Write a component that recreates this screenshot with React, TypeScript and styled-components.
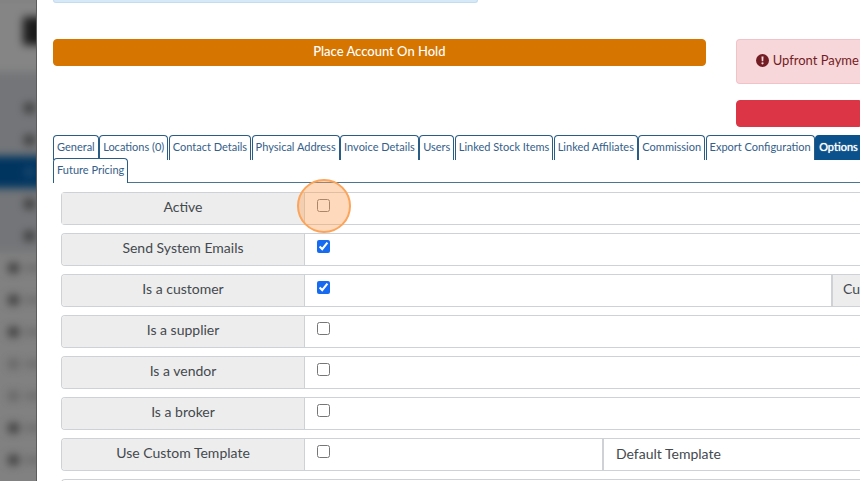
import React from "react";
import styled, { createGlobalStyle, css } from "styled-components";

const GlobalStyle = createGlobalStyle`
  * { box-sizing: border-box; }
  html, body, #root { height: 100%; }
  body {
    margin: 0;
    overflow: hidden;
    background: #fff;
    color: #44494e;
    font: 14px/20px Lato, "Noto Sans", sans-serif;
  }
  button, input, select { font: inherit; color: inherit; }
`;

const Page = styled.div`
  display: grid;
  grid-template-columns: 37px minmax(0, 1fr);
  height: 100vh;
  overflow: hidden;
`;

const Sidebar = styled.aside`
  overflow: hidden;
  background: #818181;
  border-right: 1px solid #5c5c5c;
`;

const Blurred = styled.div`
  filter: blur(4px);
  margin: 0 -12px;
`;

const Brand = styled.div`
  display: flex;
  justify-content: flex-end;
  height: 72px;
  padding: 17px 0 0;
  background: #858585;
`;

const BrandMark = styled.span`
  width: 25px;
  height: 28px;
  background: #1c1c1c;
`;

const NavGroup = styled.div`
  padding-top: 20px;
  background: #737578;
`;

const NavItem = styled.div<{ $active?: boolean; $nested?: boolean }>`
  display: flex;
  align-items: center;
  gap: 6px;
  height: 32px;
  padding-left: ${(p) => (p.$nested ? 36 : 20)}px;
  color: ${(p) => (p.$active ? "#3a6284" : "#3b3b3b")};
  background: ${(p) => (p.$active ? "#003560" : "transparent")};
`;

const NavDot = styled.span<{ $faint?: boolean }>`
  flex: none;
  width: 11px;
  height: 10px;
  border-radius: 4px;
  background: currentColor;
  opacity: ${(p) => (p.$faint ? 0.4 : 1)};
`;

const NavText = styled.span`
  flex: 1;
  height: 6px;
  background: currentColor;
  opacity: 0.35;
`;

const Panel = styled.main`
  padding-left: 16px;
  overflow: hidden;
  background: #fff;
`;

const InfoStrip = styled.div`
  width: 425px;
  height: 3px;
  background: #d6e9f9;
  border: 1px solid #c4dcf0;
  border-top: 0;
  border-radius: 0 0 4px 4px;
`;

const Actions = styled.section`
  display: grid;
  grid-template-columns: minmax(0, 21fr) minmax(0, 4fr);
  gap: 30px;
  align-items: start;
  margin-top: 36px;
`;

const SideActions = styled.div`
  display: grid;
  gap: 16px;
`;

const ActionButton = styled.button<{ $tone: string }>`
  width: 100%;
  height: 27px;
  padding: 0 8px 4px;
  border: 1px solid ${(p) => p.$tone};
  border-radius: 4px;
  background: ${(p) => p.$tone};
  color: #fff;
  font-size: 13px;
  font-weight: 500;
  line-height: 20px;
`;

const WideButton = styled(ActionButton)`
  border-radius: 4px 0 0 4px;
`;

const Alert = styled.div`
  display: flex;
  align-items: center;
  gap: 4px;
  height: 45px;
  padding: 0 0 3px 19px;
  border: 1px solid #f1c3c9;
  border-right: 0;
  border-radius: 4px 0 0 4px;
  background: #f8d7da;
  color: #721c24;
  font-size: 13px;
  white-space: nowrap;
  overflow: hidden;
  svg { flex: none; }
`;

const Tabs = styled.nav`
  margin-top: 8px;
  border-bottom: 1px solid #4c7590;
`;

const TabRow = styled.div`
  display: flex;
  justify-content: space-between;
  & + & { margin-top: -2px; margin-bottom: -1px; }
`;

const Tab = styled.button<{ $active?: boolean }>`
  flex: none;
  height: 25px;
  padding: 0 3px 2px;
  border: 1px solid #2a5d86;
  border-bottom: 0;
  border-radius: 4px 4px 0 0;
  background: #fff;
  color: #34608a;
  font-size: 11px;
  line-height: 16px;
  white-space: nowrap;
  ${(p) =>
    p.$active &&
    css`
      padding-right: 2px;
      border-right: 0;
      border-radius: 4px 0 0 0;
      background: #0b528c;
      border-color: #0b528c;
      color: #fff;
      text-shadow: 0 0 1px #fff;
    `}
`;

const Form = styled.form`
  display: grid;
  gap: 8px;
  padding: 9px 0 0 8px;
`;

const Row = styled.div`
  display: flex;
  height: 33px;
  border: 1px solid #ced2d6;
  border-right: 0;
  border-radius: 4px 0 0 4px;
  overflow: hidden;
`;

const Label = styled.label`
  flex: none;
  width: 243px;
  padding-top: 4px;
  border-right: 1px solid #ced2d6;
  background: #ededed;
  text-align: center;
`;

const Field = styled.div`
  flex: 1;
  padding: 6px 0 0 12px;
`;

const CheckSlot = styled.span`
  position: relative;
  display: block;
  width: 13px;
  height: 13px;
`;

const Checkbox = styled.input`
  display: block;
  width: 13px;
  height: 13px;
  margin: 0;
  accent-color: #176bf0;
`;

const ClickMarker = styled.span`
  position: absolute;
  top: 50%;
  left: 50%;
  width: 54px;
  height: 54px;
  transform: translate(-50%, -50%);
  border: 2px solid #fba45a;
  border-radius: 50%;
  background: rgba(255, 160, 84, 0.4);
  pointer-events: none;
`;

const ActiveRow = styled(Row)`
  overflow: visible;
`;

const SideLabel = styled.span`
  flex: none;
  width: 29px;
  padding: 4px 0 0 10px;
  border-left: 2px solid #ced2d6;
  background: #ededed;
  white-space: nowrap;
`;

const TemplateSelect = styled.select`
  flex: none;
  width: 258px;
  padding: 0 0 2px 12px;
  appearance: none;
  border: 0;
  border-left: 2px solid #ced2d6;
  border-radius: 0;
  background: #fff;
`;

const firstTabs = [
  "General",
  "Locations (0)",
  "Contact Details",
  "Physical Address",
  "Invoice Details",
  "Users",
  "Linked Stock Items",
  "Linked Affiliates",
  "Commission",
  "Export Configuration",
  "Options",
];

type Option = { id: string; label: string; checked?: boolean; side?: string; template?: string };

const options: Option[] = [
  { id: "active", label: "Active" },
  { id: "emails", label: "Send System Emails", checked: true },
  { id: "customer", label: "Is a customer", checked: true, side: "Cu" },
  { id: "supplier", label: "Is a supplier" },
  { id: "vendor", label: "Is a vendor" },
  { id: "broker", label: "Is a broker" },
  { id: "template", label: "Use Custom Template", template: "Default Template" },
];

const AlertIcon = () => (
  <svg width="13" height="13" viewBox="0 0 16 16" aria-hidden="true">
    <circle cx="8" cy="8" r="8" fill="#721c24" />
    <path d="M6.7 3.2h2.6L8.9 9H7.1z" fill="#f8d7da" />
    <circle cx="8" cy="11.5" r="1.4" fill="#f8d7da" />
  </svg>
);

export default function App() {
  return (
    <>
      <GlobalStyle />
      <Page>
        <Sidebar aria-hidden="true">
          <Blurred>
            <Brand>
              <BrandMark />
            </Brand>
            <NavGroup>
              {[0, 1, 2, 3, 4].map((n) => (
                <NavItem key={n} $nested $active={n === 2}>
                  <NavDot $faint={n === 2} />
                </NavItem>
              ))}
            </NavGroup>
            {[0, 1, 2, 3, 4, 5, 6].map((n) => (
              <NavItem key={n}>
                <NavDot $faint={n === 3 || n === 4} />
                <NavText />
              </NavItem>
            ))}
          </Blurred>
        </Sidebar>
        <Panel>
          <InfoStrip />
          <Actions>
            <ActionButton type="button" $tone="#d67500">
              Place Account On Hold
            </ActionButton>
            <SideActions>
              <Alert role="alert">
                <AlertIcon />
                <span>Upfront Payme</span>
              </Alert>
              <WideButton type="button" $tone="#dc3545" aria-label="Account action" />
            </SideActions>
          </Actions>
          <Tabs>
            <TabRow>
              {firstTabs.map((name) => (
                <Tab key={name} type="button" $active={name === "Options"}>
                  {name}
                </Tab>
              ))}
            </TabRow>
            <TabRow>
              <Tab type="button">Future Pricing</Tab>
            </TabRow>
          </Tabs>
          <Form>
            {options.map((o) => {
              const Line = o.id === "active" ? ActiveRow : Row;
              return (
                <Line key={o.id}>
                  <Label htmlFor={o.id}>{o.label}</Label>
                  <Field>
                    <CheckSlot>
                      <Checkbox id={o.id} type="checkbox" defaultChecked={o.checked} />
                      {o.id === "active" && <ClickMarker />}
                    </CheckSlot>
                  </Field>
                  {o.side && <SideLabel>{o.side}</SideLabel>}
                  {o.template && (
                    <TemplateSelect aria-label="Template">
                      <option>{o.template}</option>
                    </TemplateSelect>
                  )}
                </Line>
              );
            })}
            <Row />
          </Form>
        </Panel>
      </Page>
    </>
  );
}
